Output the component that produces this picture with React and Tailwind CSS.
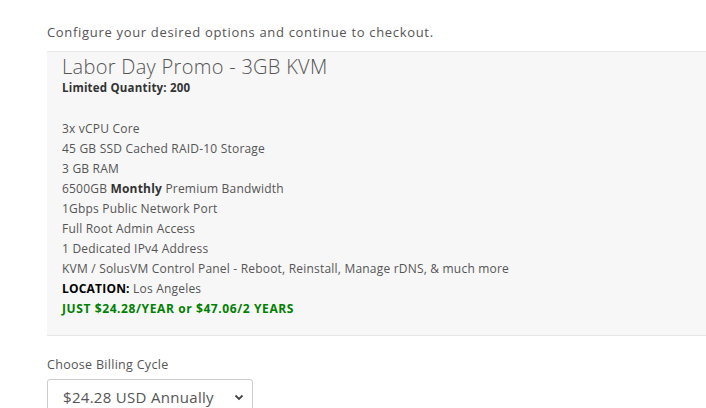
import React from "react";

const features = [
  "3x vCPU Core",
  "45 GB SSD Cached RAID-10 Storage",
  "3 GB RAM",
];

function App() {
  return (
    <div className="min-h-screen bg-white overflow-hidden" style={{ fontFamily: "'Open Sans', 'Liberation Sans', sans-serif" }}>
      <div className="pl-[47px] pt-[23px]">
        <p className="text-[13px] leading-[18px] text-[#555] tracking-[0.68px]">
          Configure your desired options and continue to checkout.
        </p>

        {/* Product box */}
        <div className="mt-[10px] bg-[#f7f7f7] border-t border-b border-[#e6e6e6] pl-[15px] pt-[2px] pb-[16px] w-[700px]">
          <h3 className="text-[20px] leading-[26px] text-[#555] font-light tracking-[0.3px]">Labor Day Promo - 3GB KVM</h3>
          <p className="text-[11.5px] leading-[16px] font-bold text-[#333] tracking-[0.2px]">Limited Quantity: 200</p>
          <div className="mt-[23px] text-[12px] leading-[20px] text-[#555] tracking-[0.2px]">
            {features.map((f) => (
              <div key={f}>{f}</div>
            ))}
            <div>
              6500GB <b className="text-[#333]">Monthly</b> Premium Bandwidth
            </div>
            <div>1Gbps Public Network Port</div>
            <div>Full Root Admin Access</div>
            <div>1 Dedicated IPv4 Address</div>
            <div>KVM / SolusVM Control Panel - Reboot, Reinstall, Manage rDNS, &amp; much more</div>
            <div>
              <b className="text-black">LOCATION:</b> Los Angeles
            </div>
            <div className="font-bold text-[#008000] tracking-[0.6px]">JUST $24.28/YEAR or $47.06/2 YEARS</div>
          </div>
        </div>

        {/* Billing cycle */}
        <div className="mt-[20px]">
          <label className="block text-[12.5px] leading-[18px] text-[#555] tracking-[0.3px]">Choose Billing Cycle</label>
          <div className="mt-[5px] w-[206px] h-[36px] border border-[#ccc] rounded-[3px] bg-white flex items-center pl-[15px] pr-[8px] justify-between">
            <span className="text-[15px] text-[#555] tracking-[0.3px]">$24.28 USD Annually</span>
            <svg width="10" height="10" viewBox="0 0 10 10">
              <path d="M1.5 3.5 L5 7 L8.5 3.5" fill="none" stroke="#444" strokeWidth="1.8" />
            </svg>
          </div>
        </div>
      </div>
    </div>
  );
}

export default App;
